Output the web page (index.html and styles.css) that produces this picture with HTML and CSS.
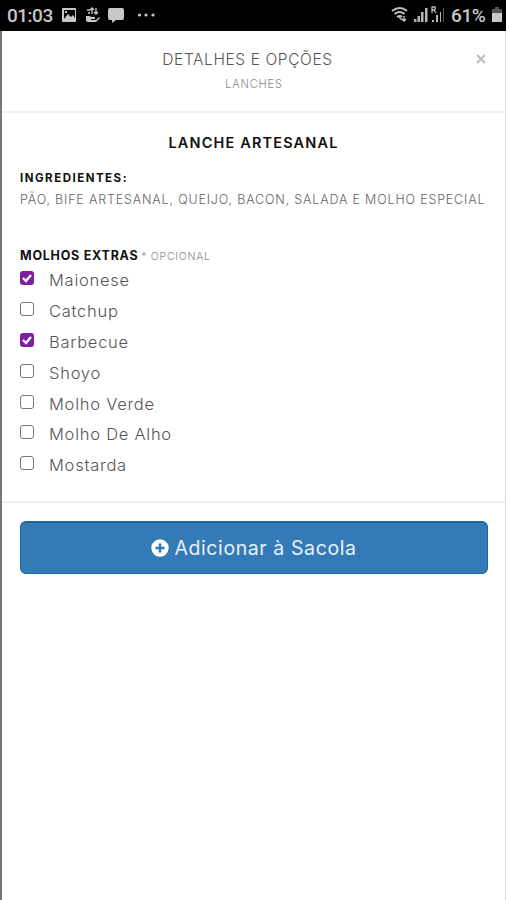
FILE: index.html
```html
<!DOCTYPE html>
<html lang="pt-BR">
<head>
<meta charset="utf-8">
<meta name="viewport" content="width=device-width, initial-scale=1">
<title>Detalhes e Opções</title>
<link rel="stylesheet" href="styles.css">
</head>
<body>
<div class="status">
  <span class="time">01:03</span>
  <svg class="notices" width="98" height="30" viewBox="0 0 98 30" fill="#c8c8c8">
    <path fill-rule="evenodd" d="M3 8h12a1 1 0 0 1 1 1v12a1 1 0 0 1-1 1H3a1 1 0 0 1-1-1V9a1 1 0 0 1 1-1zm1 2v9l4-5 3 3 2-2 2 3v-8zm1 1h2v2H5z"/>
    <path d="M26 16h3l3 1h3v2h-4v1h5l3-3 1 1-4 4h-8l-2-1z"/>
    <path d="M27 10h3M32 8v6M30 10l2-2 2 2M36 8v6M34 12l2 2 2-2M28 13h2" fill="none" stroke="#c8c8c8" stroke-width="1.3"/>
    <path d="M50 8h12q2 0 2 2v8q0 2-2 2h-6l-4 3v-3h-2q-2 0-2-2v-8q0-2 2-2z"/>
    <circle cx="79.500" cy="15" r="1.600"/><circle cx="86" cy="15" r="1.600"/><circle cx="93" cy="15" r="1.600"/>
  </svg>
  <svg class="signals" width="58" height="30" viewBox="0 0 58 30" fill="#b5b5b5">
    <path d="M2 11q8-6 15 0M4.500 14q5-4 10 0M7 17q3-2 5 0" fill="none" stroke="#bdbdbd" stroke-width="2"/>
    <path d="M9 17l3 3M14 16v5m-2-2 2 2 2-2" fill="none" stroke="#c8c8c8" stroke-width="1.300"/>
    <path d="M24 19h2.500v3H24zM27.500 16H30v6h-2.500zM31 12h2.500v10H31zM35 8h2.500v14H35z"/>
    <path d="M42 20h2v2h-2zM46 15h2v7h-2zM50 12h1v10h-1z"/><path d="M53 8h1v14h-1z" fill="#555"/>
    <path d="M42 13V7h3q1 2-1 3h-2m2 0 2 3" fill="none" stroke="#bdbdbd" stroke-width="1.300"/>
  </svg>
  <span class="percent">61%</span>
  <svg class="battery" width="10" height="30" viewBox="0 0 10 30"><path fill="#555" d="M3 7h4v2h3v5H0V9h3z"/><path fill="#c9c9c9" d="M0 13h10v9H0z"/></svg>
</div>
<main class="sheet">
  <header class="head">
    <h1 class="title"><span>DETALHES E OPÇÕES</span></h1>
    <p class="category"><span>LANCHES</span></p>
    <button class="close" aria-label="Fechar"><svg width="10" height="10" viewBox="0 0 10 10"><path d="M1 1l8 8M9 1L1 9" stroke="#bcbcbc" stroke-width="2"/></svg></button>
  </header>
  <section class="details">
    <h2 class="product"><span>LANCHE ARTESANAL</span></h2>
    <h3 class="label"><span>INGREDIENTES:</span></h3>
    <p class="ingredients"><span>PÃO, BIFE ARTESANAL, QUEIJO, BACON, SALADA E MOLHO ESPECIAL</span></p>
    <h3 class="label extras"><span>MOLHOS EXTRAS</span> <small>* OPCIONAL</small></h3>
    <ul class="options">
      <li><i class="box checked"><svg viewBox="0 0 14 14"><path d="M3 7l3 3 5-6"/></svg></i><span>Maionese</span></li>
      <li><i class="box"></i><span>Catchup</span></li>
      <li><i class="box checked"><svg viewBox="0 0 14 14"><path d="M3 7l3 3 5-6"/></svg></i><span>Barbecue</span></li>
      <li><i class="box"></i><span>Shoyo</span></li>
      <li><i class="box"></i><span>Molho Verde</span></li>
      <li><i class="box"></i><span>Molho De Alho</span></li>
      <li><i class="box"></i><span>Mostarda</span></li>
    </ul>
  </section>
  <footer class="foot">
    <button class="add"><svg width="18" height="18" viewBox="0 0 18 18"><circle cx="9" cy="9" r="8.700" fill="#fff"/><path d="M9 4.500v9M4.500 9h9" stroke="#337ab7" stroke-width="2.600"/></svg><span>Adicionar à Sacola</span></button>
  </footer>
</main>
</body>
</html>
```
FILE: styles.css
```css
* { box-sizing: border-box; }
body, h1, h2, h3, p, ul { margin: 0; padding: 0; }
body {
  height: 900px;
  overflow: hidden;
  display: flex;
  flex-direction: column;
  background: #fff;
  font-family: Inter, "Liberation Sans", sans-serif;
  font-weight: 300;
  color: #555;
}
button { border: 0; padding: 0; background: none; font: inherit; }
svg { display: block; flex: none; }
.status {
  height: 31px;
  flex: none;
  display: flex;
  align-items: flex-start;
  padding-left: 7px;
  background: #000;
  color: #c8c8c8;
  font: 500 19px/31px Roboto, sans-serif;
}
.time { width: 53px; letter-spacing: -0.5px; }
.signals { margin-left: 232px; }
.percent { width: 41px; margin-left: 3px; white-space: nowrap; letter-spacing: -0.4px; }
.sheet {
  flex: 1;
  border-left: 2px solid #777;
  border-right: 1px solid #ddd;
}
.head {
  position: relative;
  height: 82px;
  padding: 17px 0 0 1px;
  border-bottom: 2px solid #eee;
  text-align: center;
}
.title { padding-right: 13px; font-size: 15.5px; line-height: 24px; font-weight: 300; letter-spacing: 0.6px; }
.category { font-size: 11px; line-height: 24px; color: #888; letter-spacing: 0.85px; }
.close { position: absolute; right: 19px; top: 23px; }
.details { height: 390px; padding: 18px 18px 0; border-bottom: 2px solid #eee; }
.product { font-size: 14.5px; line-height: 24px; font-weight: 600; color: #111; text-align: center; letter-spacing: 1.15px; }
.label { margin-top: 12px; font-size: 11.5px; line-height: 22px; font-weight: 700; color: #111; white-space: nowrap; letter-spacing: 1.5px; }
.ingredients { font-size: 12.5px; line-height: 22px; white-space: nowrap; color: #666; letter-spacing: 0.83px; }
.extras { margin-top: 33px; font-size: 12.5px; line-height: 24px; font-weight: 700; letter-spacing: 0.75px; }
.extras span { margin-right: -1px; }
.extras small { font-size: 10.5px; font-weight: 300; color: #888; letter-spacing: 0.75px; }
.options { list-style: none; }
.options li {
  height: 30.9px;
  display: flex;
  gap: 15px;
  font-size: 16.5px;
  line-height: 22px;
  letter-spacing: 0.75px;
}
.box {
  width: 14px;
  height: 14px;
  margin-top: 2px;
  border: 1.5px solid #777;
  border-radius: 3px;
}
.checked { border: 0; background: #7b1fa2; }
.checked path { fill: none; stroke: #fff; stroke-width: 2.3; }
.foot { padding: 18px 17px 0 18px; }
.add {
  width: 100%;
  height: 53px;
  display: flex;
  align-items: center;
  justify-content: center;
  gap: 5px;
  padding-bottom: 1px;
  border: 1px solid #17699f;
  border-top-width: 2px;
  border-radius: 6px;
  background: #337ab7;
  color: #e8f3fc;
  font-size: 19.5px;
  font-weight: 400;
  letter-spacing: 0.6px;
}
```
